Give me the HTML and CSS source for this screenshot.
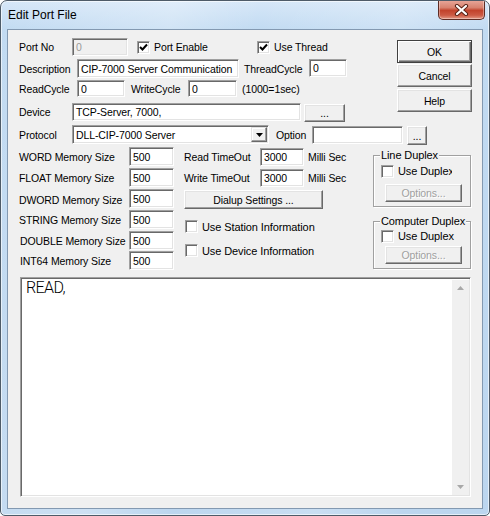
FILE: index.html
```html
<!DOCTYPE html>
<html>
<head>
<meta charset="utf-8">
<link rel="stylesheet" href="styles.css">
</head>
<body>
<div class="window">
  <div class="titlebar">
    <span class="title">Edit Port File</span>
    <div class="close">
      <svg width="15" height="12" viewBox="0 0 15 12">
        <path d="M3 2 L12 10 M12 2 L3 10" stroke="#5a2418" stroke-width="4.2" stroke-linecap="round"/>
        <path d="M3 2 L12 10 M12 2 L3 10" stroke="#ffffff" stroke-width="2.2" stroke-linecap="round"/>
      </svg>
    </div>
  </div>
  <div class="client">
    <div class="top">
      <div class="top-left">
        <div class="row r1">
          <span class="lbl w53">Port No</span>
          <span class="edit dis w56 h18">0</span>
          <label class="check pe"><span class="cb"><svg width="9" height="9" viewBox="0 0 9 9"><path d="M1 4 L3.5 6.5 L8 1.5" stroke="#000" stroke-width="2" fill="none"/></svg></span>Port Enable</label>
          <label class="check"><span class="cb"><svg width="9" height="9" viewBox="0 0 9 9"><path d="M1 4 L3.5 6.5 L8 1.5" stroke="#000" stroke-width="2" fill="none"/></svg></span>Use Thread</label>
        </div>
        <div class="row r2">
          <span class="lbl w58">Description</span>
          <span class="edit w162 h19">CIP-7000 Server Communication</span>
          <span class="lbl tc">ThreadCycle</span>
          <span class="edit w38 h18 up1">0</span>
        </div>
        <div class="row r3">
          <span class="lbl w58">ReadCycle</span>
          <span class="edit w48 h17">0</span>
          <span class="lbl wc">WriteCycle</span>
          <span class="edit w49 h17">0</span>
          <span class="lbl note">(1000=1sec)</span>
        </div>
        <div class="row r4">
          <span class="lbl w53">Device</span>
          <span class="edit w229 h18">TCP-Server, 7000,</span>
          <span class="btn dots devbtn">...</span>
        </div>
      </div>
      <div class="btncol">
        <span class="btn def">OK</span>
        <span class="btn cancel">Cancel</span>
        <span class="btn help">Help</span>
      </div>
    </div>
    <div class="row r5">
      <span class="lbl w53">Protocol</span>
      <span class="combo">
        <span class="combo-text">DLL-CIP-7000 Server</span>
        <span class="combo-btn"><svg width="7" height="4" viewBox="0 0 7 4"><path d="M0 0 H7 L3.5 4 Z" fill="#000"/></svg></span>
      </span>
      <span class="lbl opt">Option</span>
      <span class="edit w91 h18"></span>
      <span class="btn dots optbtn">...</span>
    </div>
    <div class="middle">
      <div class="colA">
        <div class="mrow"><span class="lbl">WORD Memory Size</span><span class="edit mem">500</span></div>
        <div class="mrow"><span class="lbl">FLOAT Memory Size</span><span class="edit mem">500</span></div>
        <div class="mrow"><span class="lbl lo">DWORD Memory Size</span><span class="edit mem">500</span></div>
        <div class="mrow"><span class="lbl">STRING Memory Size</span><span class="edit mem">500</span></div>
        <div class="mrow"><span class="lbl in1">DOUBLE Memory Size</span><span class="edit mem">500</span></div>
        <div class="mrow last"><span class="lbl in1">INT64 Memory Size</span><span class="edit mem">500</span></div>
      </div>
      <div class="colB">
        <div class="trow first"><span class="lbl tlbl">Read TimeOut</span><span class="edit tin">3000</span><span class="lbl ms">Milli Sec</span></div>
        <div class="trow"><span class="lbl tlbl">Write TimeOut</span><span class="edit tin">3000</span><span class="lbl ms">Milli Sec</span></div>
        <span class="btn dial">Dialup Settings ...</span>
        <label class="check c1"><span class="cb"></span>Use Station Information</label>
        <label class="check c2"><span class="cb"></span>Use Device Information</label>
      </div>
      <div class="colC">
        <div class="group g1">
          <span class="legend">Line Duplex</span>
          <label class="check gc clip"><span class="cb"></span>Use Duplex</label>
          <span class="btn disabled gopt">Options...</span>
        </div>
        <div class="group g2">
          <span class="legend">Computer Duplex</span>
          <label class="check gc"><span class="cb"></span>Use Duplex</label>
          <span class="btn disabled gopt">Options...</span>
        </div>
      </div>
    </div>
    <div class="memo">
      <div class="memo-text">READ,</div>
      <div class="scroll">
        <svg width="7" height="4" viewBox="0 0 7 4"><path d="M0 4 H7 L3.5 0 Z" fill="#a8a8a8"/></svg>
        <svg width="7" height="4" viewBox="0 0 7 4"><path d="M0 0 H7 L3.5 4 Z" fill="#a8a8a8"/></svg>
      </div>
    </div>
  </div>
</div>
</body>
</html>
```

FILE: styles.css
```css
html, body {
  margin: 0;
  padding: 0;
  background: #ffffff;
}

.window {
  box-sizing: border-box;
  width: 490px;
  height: 516px;
  border: 1px solid #4e5b68;
  border-radius: 7px 7px 5px 5px;
  padding: 0 6px 6px 6px;
  display: flex;
  flex-direction: column;
  background:
    linear-gradient(100deg, rgba(255,255,255,0) 0%, rgba(255,255,255,0.25) 30%, rgba(255,255,255,0) 45%, rgba(255,255,255,0.2) 70%, rgba(255,255,255,0) 85%),
    linear-gradient(to bottom, #d6e7f8 0px, #c2dbf2 28px, #bcd6ef 100%);
  box-shadow: inset 0 0 0 1px rgba(255,255,255,0.6);
  overflow: hidden;
}

.titlebar {
  height: 28px;
  display: flex;
  align-items: flex-start;
  flex: none;
}

.title {
  font-family: "Liberation Sans", "Noto Sans", sans-serif;
  font-size: 12px;
  color: #000;
  margin-top: 7px;
  margin-left: 1px;
}

.close {
  margin-left: auto;
  margin-top: -1px;
  margin-right: -2px;
  width: 47px;
  height: 20px;
  box-sizing: border-box;
  border: 1px solid #5e2c24;
  border-top: none;
  border-radius: 0 0 5px 5px;
  background: linear-gradient(to bottom, #e9a99c 0%, #d8826f 40%, #c2432c 55%, #cc5a44 80%, #e39a86 100%);
  box-shadow: inset 0 0 0 1px rgba(255,255,255,0.35);
  display: flex;
  align-items: center;
  justify-content: center;
}

.client {
  flex: 1;
  border: 1px solid #8399b1;
  background: #f0f0f0;
  padding-left: 11px;
  font-family: "Liberation Sans", "Noto Sans", sans-serif;
  font-size: 10.5px;
  letter-spacing: -0.1px;
  color: #000;
  display: flex;
  flex-direction: column;
}

.row {
  display: flex;
  align-items: center;
  flex: none;
}

.lbl {
  white-space: nowrap;
  flex: none;
}

.w53 { width: 53px; }
.w58 { width: 58px; }

.edit {
  box-sizing: border-box;
  flex: none;
  background: #fff;
  border: 1px solid;
  border-color: #a0a0a0 #ffffff #ffffff #a0a0a0;
  box-shadow: inset 1px 1px 0 #696969, inset -1px -1px 0 #e3e3e3;
  padding-left: 3px;
  display: flex;
  align-items: center;
  white-space: nowrap;
  overflow: hidden;
}

.edit.dis {
  background: #f0f0f0;
  color: #9a9a9a;
}

.w56 { width: 56px; }
.w162 { width: 162px; }
.w38 { width: 38px; }
.w48 { width: 48px; }
.w49 { width: 49px; }
.w229 { width: 229px; }
.w91 { width: 91px; }
.h17 { height: 17px; }
.h18 { height: 18px; }
.h19 { height: 19px; }

.check {
  display: flex;
  align-items: center;
  white-space: nowrap;
  flex: none;
}

.cb {
  box-sizing: border-box;
  width: 13px;
  height: 13px;
  flex: none;
  background: #fff;
  border: 1px solid;
  border-color: #a0a0a0 #ffffff #ffffff #a0a0a0;
  box-shadow: inset 1px 1px 0 #696969, inset -1px -1px 0 #e3e3e3;
  margin-right: 4px;
  display: flex;
  align-items: center;
  justify-content: center;
}

.top {
  display: flex;
  flex: none;
}

.top-left {
  width: 378px;
  display: flex;
  flex-direction: column;
}

.r1 { margin-top: 8px; height: 18px; }
.r1 .pe { margin-left: 9px; width: 120px; }
.r2 { margin-top: 3px; height: 19px; }
.r2 .tc { margin-left: 5px; width: 65px; }
.up1 { margin-top: -1px; }
.r3 { margin-top: 2px; height: 17px; }
.r3 .wc { margin-left: 6px; width: 57px; }
.r3 .note { margin-left: 5px; }
.r4 { margin-top: 6px; height: 18px; }

.btn {
  box-sizing: border-box;
  flex: none;
  display: flex;
  align-items: center;
  justify-content: center;
  background: #f0f0f0;
  border: 1px solid;
  border-color: #ffffff #696969 #696969 #ffffff;
  box-shadow: inset -1px -1px 0 #a0a0a0, inset 1px 1px 0 #e3e3e3;
  white-space: nowrap;
}

.dots {
  align-items: flex-end;
  padding-bottom: 2px;
}

.devbtn {
  margin-left: 3px;
  margin-top: 2px;
  width: 41px;
  height: 18px;
}

.btncol {
  display: flex;
  flex-direction: column;
  width: 75px;
}

.btncol .btn {
  width: 75px;
  height: 23px;
}

.btncol .def {
  margin-top: 10px;
  border-color: #404040;
  box-shadow: inset 1px 1px 0 #ffffff, inset -1px -1px 0 #696969, inset -2px -2px 0 #a0a0a0;
}
.btncol .cancel { margin-top: 1px; }
.btncol .help { margin-top: 2px; }

.r5 { margin-top: 4px; height: 19px; }

.combo {
  box-sizing: border-box;
  width: 197px;
  height: 19px;
  flex: none;
  background: #fff;
  border: 1px solid;
  border-color: #a0a0a0 #ffffff #ffffff #a0a0a0;
  box-shadow: inset 1px 1px 0 #696969, inset -1px -1px 0 #e3e3e3;
  display: flex;
  align-items: stretch;
  padding: 1px 1px 1px 1px;
}

.combo-text {
  flex: 1;
  display: flex;
  align-items: center;
  padding-left: 2px;
  white-space: nowrap;
}

.combo-btn {
  box-sizing: border-box;
  width: 16px;
  background: #f0f0f0;
  border: 1px solid;
  border-color: #e3e3e3 #696969 #696969 #e3e3e3;
  box-shadow: inset -1px -1px 0 #a0a0a0, inset 1px 1px 0 #fff;
  display: flex;
  align-items: center;
  justify-content: center;
}

.r5 .opt { margin-left: 7px; width: 36px; }

.optbtn {
  margin-left: 4px;
  margin-top: 2px;
  width: 20px;
  height: 19px;
}

.middle {
  display: flex;
  height: 130px;
  margin-top: 3px;
  flex: none;
}

.colA {
  width: 155px;
  display: flex;
  flex-direction: column;
  flex: none;
}

.mrow {
  display: flex;
  align-items: center;
  height: 19px;
  margin-bottom: 2px;
}

.mrow.last { margin-top: -1px; }

.mrow .lbl { width: 110px; }
.mrow .lbl.lo { padding-top: 3px; }
.mrow .lbl.in1 { padding-left: 1px; width: 109px; }

.edit.mem {
  width: 45px;
  height: 19px;
}

.colB {
  margin-left: 10px;
  width: 139px;
  display: flex;
  flex-direction: column;
  flex: none;
}

.trow {
  display: flex;
  align-items: center;
  height: 18px;
  margin-bottom: 3px;
}

.trow.first { margin-top: 1px; }

.tlbl { width: 76px; }

.edit.tin {
  width: 44px;
  height: 18px;
}

.ms { margin-left: 4px; }

.dial {
  width: 139px;
  height: 19px;
}

.colB .check.c1 { margin-top: 11px; margin-left: 1px; }
.colB .check.c2 { margin-top: 11px; margin-left: 1px; }
.colB .check { font-size: 11px; }
.colB .check .cb { margin-right: 4px; }

.colC {
  margin-left: 50px;
  width: 98px;
  display: flex;
  flex-direction: column;
  flex: none;
}

.group {
  box-sizing: border-box;
  width: 98px;
  border: 1px solid #a0a0a0;
  box-shadow: inset 1px 1px 0 #ffffff, 1px 1px 0 #ffffff;
  display: flex;
  flex-direction: column;
  padding-left: 7px;
}

.g1 { margin-top: 8px; height: 52px; }
.g2 { margin-top: 14px; height: 48px; }

.legend {
  align-self: flex-start;
  margin-top: -8px;
  margin-left: -1px;
  padding: 0 1px;
  background: #f0f0f0;
  line-height: 14px;
  white-space: nowrap;
  font-size: 11px;
}

.gc { height: 14px; font-size: 11px; }
.g1 .gc { margin-top: 2px; }
.g2 .gc { margin-top: 1px; }
.gc .cb { margin-right: 4px; }
.clip { width: 71px; overflow: hidden; }

.g1 .gopt { margin-top: 6px; }
.g2 .gopt { margin-top: 3px; }

.gopt {
  margin-left: 4px;
  width: 77px;
  height: 18px;
}

.btn.disabled {
  color: #a0a0a0;
  text-shadow: 1px 1px 0 #ffffff;
}

.memo {
  box-sizing: border-box;
  margin-left: 1px;
  width: 451px;
  height: 220px;
  flex: none;
  background: #fff;
  border: 1px solid;
  border-color: #a0a0a0 #ffffff #ffffff #a0a0a0;
  box-shadow: inset 1px 1px 0 #696969, inset -1px -1px 0 #e3e3e3;
  display: flex;
  padding: 2px 1px 1px 2px;
}

.memo-text {
  flex: 1;
  font-family: Roboto, "Liberation Sans", sans-serif;
  font-weight: 300;
  font-size: 16px;
  letter-spacing: -0.6px;
  line-height: 16px;
  padding-left: 3px;
  padding-top: 0;
  color: #000;
}

.scroll {
  width: 17px;
  background: #f0f0f0;
  display: flex;
  flex-direction: column;
  justify-content: space-between;
  align-items: center;
  padding: 6px 0 6px 0;
}
```
